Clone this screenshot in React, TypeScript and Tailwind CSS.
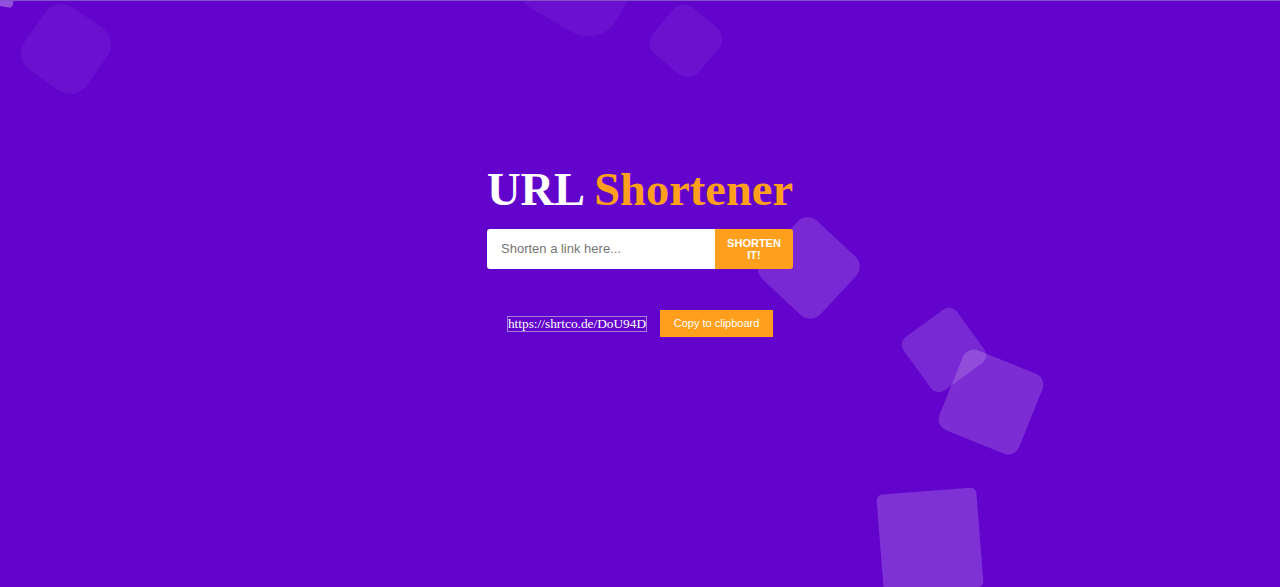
const App = () => {
  return (
    <div className="relative h-[587px] w-full overflow-hidden border-t border-[#8152c9] bg-[#6204cc] font-['Liberation_Sans',Arial,sans-serif]">
      {/* floating squares */}
      <div className="absolute left-[-24px] top-[-36px] h-[40px] w-[40px] rotate-[10deg] rounded-[4px] bg-white/30" />
      <div className="absolute left-[28px] top-[10px] h-[76px] w-[76px] rotate-[35deg] rounded-[20px] bg-white/[0.05]" />
      <div className="absolute left-[525px] top-[-83px] h-[110px] w-[110px] rotate-[30deg] rounded-[32px] bg-white/[0.05]" />
      <div className="absolute left-[656px] top-[10px] h-[60px] w-[60px] rotate-[40deg] rounded-[15px] bg-white/[0.06]" />
      <div className="absolute left-[769px] top-[227px] h-[80px] w-[80px] rotate-[43deg] rounded-[14px] bg-white/15" />
      <div className="absolute left-[911px] top-[316px] h-[66px] w-[66px] rotate-[54deg] rounded-[10px] bg-white/15" />
      <div className="absolute left-[948px] top-[358px] h-[86px] w-[86px] rotate-[22deg] rounded-[12px] bg-white/[0.17]" />
      <div className="absolute left-[880px] top-[490px] h-[100px] w-[100px] rotate-[-4.5deg] rounded-[6px] bg-white/[0.18]" />

      <main className="relative z-10 flex flex-col items-center pt-[166px]">
        <h1 className="font-['Liberation_Serif','Times_New_Roman',serif] text-[46.5px] font-bold leading-[46px] text-white">
          URL <span className="text-[#ff9f1c]">Shortener</span>
        </h1>

        <form className="mt-4 flex h-10 w-[306px]" onSubmit={(e) => e.preventDefault()}>
          <input
            type="text"
            placeholder="Shorten a link here..."
            className="min-w-0 flex-1 rounded-l-[3px] bg-white px-[14px] text-[13px] text-gray-800 outline-none placeholder:text-[#757575]"
          />
          <button
            type="submit"
            className="w-[78px] rounded-r-[3px] bg-[#ff9f1c] px-2 text-[11px] font-bold leading-[12px] text-white"
          >
            SHORTEN IT!
          </button>
        </form>

        <div className="mt-[41px] flex items-center gap-[13px]">
          <a
            href="#"
            className="border border-[#a77ddb] font-['Liberation_Serif','Times_New_Roman',serif] text-[13.33px] leading-[14px] text-white"
          >
            https://shrtco.de/DoU94D
          </a>
          <button className="h-[27px] w-[113px] bg-[#ff9f1c] text-[11px] text-white">
            Copy to clipboard
          </button>
        </div>
      </main>
    </div>
  );
};

export default App;
